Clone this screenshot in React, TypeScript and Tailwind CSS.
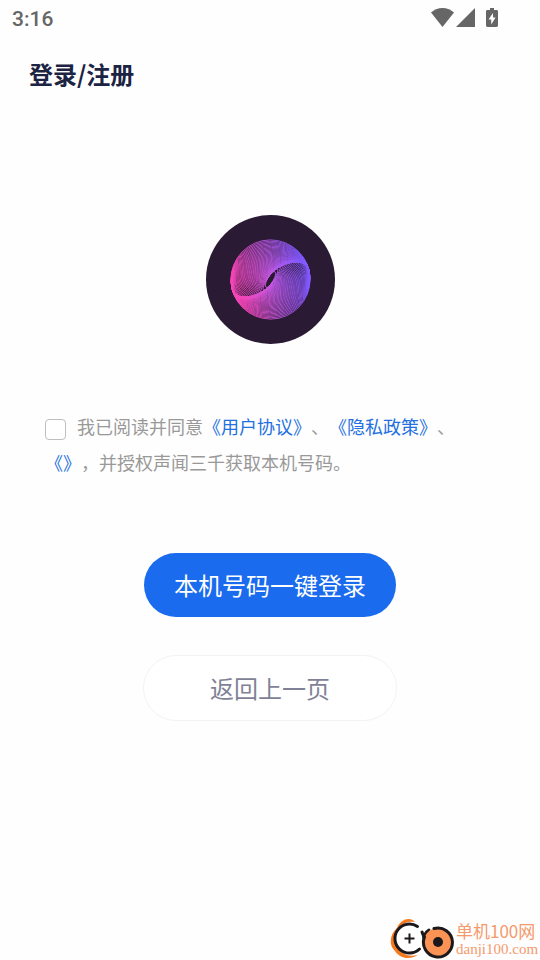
import { useState } from "react";

const RING_COUNT = 46;

// Nested ellipses that turn and flatten towards the centre
const rings = Array.from({ length: RING_COUNT }, (_, i) => {
  const t = i / (RING_COUNT - 1);
  return {
    rx: 39.6 - 30.6 * Math.pow(t, 6),
    ry: 3 + 36.6 * Math.pow(1 - t, 1.7),
    angle: -12 - 48 * Math.pow(t, 3),
  };
});

const StatusBar = () => (
  <header className="flex h-9 items-start justify-between pl-3 pr-[42px] pt-2 text-[#666666]">
    <time className="font-['Roboto',sans-serif] text-[21px] font-medium leading-[22px]">3:16</time>
    <div className="flex items-center">
      <svg width="23" height="19" viewBox="0 0 23 19" fill="currentColor" aria-hidden="true">
        <path d="M11.5 19 L0 4.6 C3 2 7 0 11.5 0 C16 0 20 2 23 4.6 Z" />
      </svg>
      <svg className="ml-0.5" width="19" height="19" viewBox="0 0 19 19" fill="currentColor" aria-hidden="true">
        <path d="M19 0 V19 H0 Z" />
      </svg>
      <svg className="ml-[11px]" width="12" height="19" viewBox="0 0 12 19" fill="currentColor" aria-hidden="true">
        <path
          fillRule="evenodd"
          d="M4 0 H8 V2 H10.6 Q12 2 12 3.4 V17.6 Q12 19 10.6 19 H1.4 Q0 19 0 17.6 V3.4 Q0 2 1.4 2 H4 Z M7 5 L2.5 11.5 H5.2 V16.5 L9.6 9.5 H7 Z"
        />
      </svg>
    </div>
  </header>
);

const Logo = () => (
  <svg width="129" height="129" viewBox="-64.5 -64.5 129 129" role="img" aria-label="声闻三千">
    <defs>
      <linearGradient id="ring" gradientUnits="userSpaceOnUse" x1="-30" y1="12" x2="32" y2="-4">
        <stop offset="0" stopColor="#f545b8" />
        <stop offset="0.5" stopColor="#c458e4" />
        <stop offset="1" stopColor="#8458ff" />
      </linearGradient>
    </defs>
    <circle r="64.5" fill="#2a1a33" />
    <mask id="lines" maskUnits="userSpaceOnUse" x="-45" y="-45" width="90" height="90">
      <g fill="none" stroke="#ffffff" strokeWidth="0.8">
        {rings.map((ring, i) => (
          <ellipse key={i} rx={ring.rx} ry={ring.ry} transform={`rotate(${ring.angle})`} />
        ))}
      </g>
    </mask>
    <rect x="-45" y="-45" width="90" height="90" fill="url(#ring)" mask="url(#lines)" />
  </svg>
);

interface AgreementLinkProps {
  label: string;
}

const AgreementLink = ({ label }: AgreementLinkProps) => (
  <a href="#agreement" className="text-[#2370e0]">
    {label}
  </a>
);

const Watermark = () => (
  <footer className="mt-auto flex items-center justify-end gap-0.5 text-[#f59a6c]">
    <svg width="64" height="42" viewBox="0 0 64 42" fill="none" aria-hidden="true">
      <path
        d="M25 4 C21 -1 11 0 7 10 C-1 17 -1 28 5 33 C10 41 20 42 28 37 C18 39 12 36 9 31 C2 24 3 14 10 9 C14 4 19 3 25 4 Z"
        fill="#f47a20"
      />
      <circle cx="19.5" cy="20.5" r="14" fill="#ffffff" />
      <path d="M27.5 8.5 A14.5 14.5 0 1 0 29.5 31" stroke="#1c181b" strokeWidth="3" strokeLinecap="round" />
      <path d="M19.5 15.5 V25.5 M14.5 20.5 H24.5" stroke="#1c181b" strokeWidth="2" />
      <path d="M32 14 C33 16 34 18 34 21 C34 17 36 14 39 12" stroke="#1c181b" strokeWidth="3" strokeLinecap="round" />
      <circle cx="48" cy="24" r="14" fill="#fb9355" />
      <path d="M44 10.5 A14.5 14.5 0 1 1 34.5 19" stroke="#1c181b" strokeWidth="3" strokeLinecap="round" />
      <circle cx="48" cy="24" r="5" fill="#1c181b" />
    </svg>
    <div className="w-[84px] whitespace-nowrap">
      <p className="font-['Noto_Sans_CJK_SC',sans-serif] text-[17px] leading-5">单机100网</p>
      <p className="font-['Liberation_Serif',serif] text-[15px] leading-4">danji100.com</p>
    </div>
  </footer>
);

export default function App() {
  const [agreed, setAgreed] = useState(false);

  return (
    <div className="flex min-h-screen flex-col bg-[#fefefe] font-['Noto_Sans_CJK_SC',sans-serif]">
      <StatusBar />

      <h1 className="mt-5 px-[29px] text-[24px] font-bold leading-9 text-[#1c2343]">登录/注册</h1>

      <main className="flex flex-col items-center">
        <div className="mt-[123px]">
          <Logo />
        </div>

        <div className="mt-16 w-full px-[45px] text-[18px] leading-9 text-[#999999] [text-spacing-trim:space-all]">
          <input
            id="agree"
            type="checkbox"
            checked={agreed}
            onChange={(e) => setAgreed(e.target.checked)}
            className="mr-[11px] size-[21px] appearance-none rounded border border-[#bfbfbf] bg-white align-middle checked:bg-[#1a6bee]"
          />
          <label htmlFor="agree">我已阅读并同意</label>
          <AgreementLink label="《用户协议》" />、
          <AgreementLink label="《隐私政策》" />、
          <AgreementLink label="《》" />，并授权声闻三千获取本机号码。
        </div>

        <button
          type="button"
          className="mt-[73px] h-16 w-[252px] rounded-full bg-[#1a6bee] text-[24px] text-white"
        >
          本机号码一键登录
        </button>
        <button
          type="button"
          className="mt-[38px] h-[66px] w-[254px] rounded-full border border-[#f3f3f5] bg-white text-[24px] text-[#7f8296]"
        >
          返回上一页
        </button>
      </main>

      <Watermark />
    </div>
  );
}
